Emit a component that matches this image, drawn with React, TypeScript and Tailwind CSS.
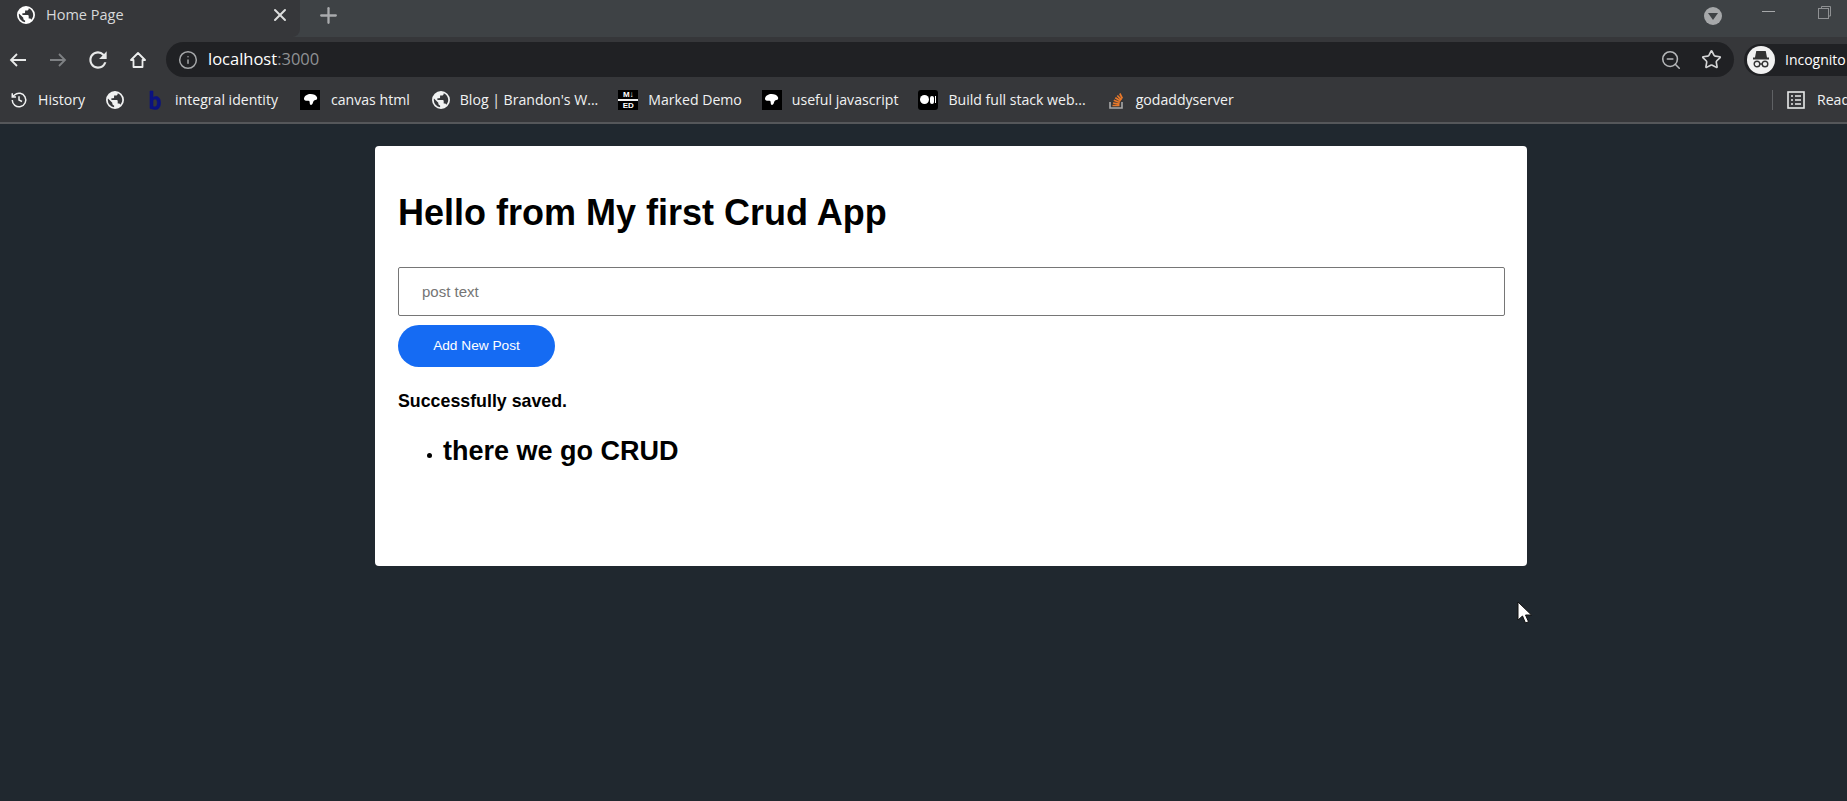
import { Info, Plus, Star, X, ZoomOut } from "lucide-react";

function Globe({ size = 18 }: { size?: number }) {
  return (
    <svg width={size} height={size} viewBox="2 2 20 20" fill="currentColor" className="shrink-0">
      <path d="M12 2a10 10 0 1 0 0 20 10 10 0 0 0 0-20zM4 12c0-.6.1-1.200.2-1.800L9 15v1c0 1.100.9 2 2 2v2a8 8 0 0 1-7-8zm13.900 5.400c-.3-.8-1-1.400-1.900-1.400h-1v-3c0-.6-.4-1-1-1H8v-2h2c.6 0 1-.4 1-1V7h2c1.100 0 2-.9 2-2v-.4a8 8 0 0 1 2.900 12.800z" />
    </svg>
  );
}

function Fav({ kind }: { kind: string }) {
  if (kind === "globe") return <Globe />;
  if (kind === "b") {
    return (
      <svg width="12" height="20" viewBox="0 0 12 20" className="shrink-0">
        <path d="M1 1h3v6.500C5 6.800 6 6.500 7 6.500c2.800 0 4.500 2.300 4.500 6.300 0 4-1.900 6.700-4.700 6.700-1.300 0-2.700-.4-5.800-1.100zM4 10.200v6.300c.7.300 1.300.4 2 .4 1.400 0 2.300-1.500 2.300-4.100 0-2.400-.8-3.700-2-3.700-.9 0-1.600.4-2.300 1.100z" fill="#0b1280" stroke="#0b1280" strokeWidth=".6" />
      </svg>
    );
  }
  if (kind === "blob") {
    return (
      <span className="flex h-5 w-5 shrink-0 items-center justify-center bg-black">
        <svg width="15" height="13" viewBox="0 0 15 13">
          <path d="M1 5.500C1.500 2.500 4.500 1 7.500 1c3 0 5.500 1 6.500 3.200.6 1.500-.2 2.600-1.600 2.900-1.200.3-2 .9-2.400 2.400-.4 1.800-1.600 2.800-2.600 2.300-.8-.4-.5-2-.9-3.300C6.100 7.300 4.500 8 3 7.800 1.800 7.600.8 6.700 1 5.500z" fill="#fff" />
        </svg>
      </span>
    );
  }
  if (kind === "marked") {
    return (
      <span className="flex h-5 w-5 shrink-0 flex-col bg-[#f0f0f0] text-center font-['Liberation_Sans',sans-serif] text-[8px] leading-[9px] font-bold text-white">
        <span className="h-[9px] bg-black">M↓</span>
        <span className="mt-[2px] h-[9px] bg-black">ED</span>
      </span>
    );
  }
  if (kind === "medium") {
    return (
      <span className="flex h-5 w-5 shrink-0 items-center justify-center gap-px rounded-[3px] bg-black">
        <span className="h-[9px] w-[9px] rounded-full bg-white" />
        <span className="h-2 w-1 rounded-full bg-white" />
        <span className="h-[7px] w-px bg-white" />
      </span>
    );
  }
  return (
    <svg width="20" height="20" viewBox="0 0 20 20" fill="none" className="shrink-0">
      <path d="M4 12v6h12v-6" stroke="#a8a8a8" strokeWidth="1.600" />
      <path d="M6.500 15.500h7M7 13l6.500 1.100M7.800 10.300l6 2.200M9.300 7.800l5.300 3.200M11.300 5.500l4.200 4.300M13.800 3.500l2.500 5" stroke="#e8782a" strokeWidth="1.700" />
    </svg>
  );
}

const bookmarks = [
  { kind: "b", label: "integral identity", gap: "gap-[14px] mr-[2px]" },
  { kind: "blob", label: "canvas html", gap: "gap-[11px] mr-[2px]" },
  { kind: "globe", label: "Blog | Brandon's W...", gap: "gap-[10px]" },
  { kind: "marked", label: "Marked Demo", gap: "gap-[10px]" },
  { kind: "blob", label: "useful javascript", gap: "gap-[10px]" },
  { kind: "medium", label: "Build full stack web...", gap: "gap-[10px]" },
  { kind: "stack", label: "godaddyserver", gap: "gap-[10px]" },
];

function BrowserChrome() {
  return (
    <header className="shrink-0 font-['Open_Sans','Liberation_Sans',sans-serif] text-white">
      <div className="flex h-[37px] items-center overflow-hidden bg-[#3e4245] pb-[6px]">
        <div className="-mb-[6px] flex h-[37px] w-[300px] shrink-0 items-center rounded-br-lg bg-[#36373a] pr-[10px] pb-[7px] pl-[17px]">
          <Globe />
          <span className="ml-[11px] text-[14.5px] text-[#d8d9da]">Home Page</span>
          <X size={20} strokeWidth={2.400} className="ml-auto text-[#dcdddd]" />
        </div>
        <Plus size={25} strokeWidth={2.200} className="ml-[16px] text-[#a9abad]" />
        <span className="ml-auto flex h-[18px] w-[18px] items-center justify-center rounded-full bg-[#a6a8aa]">
          <span className="mt-[2px] h-0 w-0 border-x-[5px] border-t-[7px] border-x-transparent border-t-[#3e4245]" />
        </span>
        <span className="mb-[8px] ml-[40px] h-px w-[13px] bg-[#a6a8aa]" />
        <svg width="13" height="13" viewBox="0 0 13 13" fill="none" stroke="#8f9193" className="mr-[16px] mb-[6px] ml-[43px]">
          <path d="M3.500 2.500V.5h9v9.500h-2" />
          <rect x=".5" y="2.500" width="10" height="10" />
        </svg>
      </div>
      <div className="flex h-[42px] items-center overflow-hidden bg-[#36373a] pt-[3px]">
        <svg width="17" height="14" viewBox="0 0 17 14" fill="none" stroke="#e8e9e9" strokeWidth="1.800" className="ml-[9px] shrink-0">
          <path d="M17 7H2M8 1 2 7l6 6" />
        </svg>
        <svg width="17" height="14" viewBox="0 0 17 14" fill="none" stroke="#7f8184" strokeWidth="1.800" className="ml-[24px] shrink-0">
          <path d="M0 7h15M9 1l6 6-6 6" />
        </svg>
        <svg width="26" height="26" viewBox="0 0 24 24" fill="#e8e9e9" className="ml-[18px] shrink-0">
          <path d="M17.650 6.350A7.958 7.958 0 0 0 12 4c-4.420 0-7.990 3.580-7.990 8s3.570 8 7.990 8c3.730 0 6.840-2.550 7.730-6h-2.080A5.990 5.990 0 0 1 12 18c-3.310 0-6-2.690-6-6s2.690-6 6-6c1.660 0 3.140.69 4.220 1.780L13 11h7V4l-2.350 2.350z" />
        </svg>
        <svg width="16" height="16" viewBox="0 0 16 16" fill="none" stroke="#eceded" strokeWidth="1.800" strokeLinejoin="round" className="ml-[19px] shrink-0">
          <path d="M1 8 8 1l7 7h-2.500v7h-9V8z" />
        </svg>
        <div className="ml-[20px] flex h-[35px] flex-1 items-center rounded-full bg-[#202124] pr-[12px] pl-[12px]">
          <Info size={20} strokeWidth={1.800} className="text-[#a5a7a9]" />
          <span className="ml-[10px] text-[16.500px]">
            localhost<span className="text-[#8f9194]">:3000</span>
          </span>
          <ZoomOut size={22} strokeWidth={1.700} className="ml-auto text-[#b5b7b9]" />
          <Star size={21} strokeWidth={1.900} className="ml-[19px] text-[#d5d6d7]" />
        </div>
        <div className="ml-[10px] flex h-[32px] w-[103px] shrink-0 items-center rounded-l-full bg-[#202124] pl-[3px]">
          <span className="flex h-7 w-7 shrink-0 items-center justify-center rounded-full bg-[#f1f1f1]">
            <svg width="20" height="17" viewBox="0 0 20 17" fill="none">
              <path d="M6 1h8l1 5H5zM2 7.500h16" stroke="#333" strokeWidth="1.800" fill="#333" />
              <circle cx="6" cy="13" r="2.800" stroke="#333" strokeWidth="1.400" />
              <circle cx="14" cy="13" r="2.800" stroke="#333" strokeWidth="1.400" />
              <path d="M9 13h2" stroke="#333" strokeWidth="1.400" />
            </svg>
          </span>
          <span className="ml-[10px] text-[14px] whitespace-nowrap">Incognito</span>
        </div>
      </div>
      <div className="flex h-[45px] items-center overflow-hidden border-b-2 border-[#55575a] bg-[#36373a] pb-px text-[14.100px] text-[#f1f2f2] whitespace-nowrap">
        <svg width="18" height="18" viewBox="0 0 24 24" fill="none" stroke="currentColor" strokeWidth="2" className="ml-[10px] shrink-0">
          <path d="M3 12a9 9 0 1 0 3-6.700L3 8M3 3v5h5M12 7v5l4 2" />
        </svg>
        <span className="ml-[10px]">History</span>
        <span className="mr-[25px] ml-[21px] flex">
          <Globe />
        </span>
        <div className="flex items-center gap-5">
          {bookmarks.map((b, i) => (
            <div key={i} className={`flex items-center ${b.gap}`}>
              <Fav kind={b.kind} />
              <span>{b.label}</span>
            </div>
          ))}
        </div>
        <span className="ml-auto h-5 w-px bg-[#5f6164]" />
        <svg width="18" height="18" viewBox="0 0 18 18" fill="none" stroke="#e8e9e9" strokeWidth="1.600" className="ml-[14px] shrink-0">
          <rect x="1" y="1" width="16" height="16" />
          <path d="M4 5h2M4 9h2M4 13h2M8 5h6M8 9h6M8 13h6" />
        </svg>
        <span className="ml-[12px] w-[30px] overflow-hidden">Reading list</span>
      </div>
    </header>
  );
}

export default function App() {
  return (
    <div className="relative flex h-[801px] flex-col overflow-hidden bg-[#20282f] font-['Liberation_Sans',sans-serif]">
      <BrowserChrome />
      <main className="mt-[22px] ml-[375px] h-[420px] w-[1152px] overflow-hidden rounded-[4px] bg-white pr-[22px] pl-[23px] text-black">
        <h1 className="mt-[46px] text-[36px] leading-[41px] font-bold">Hello from My first Crud App</h1>
        <input
          placeholder="post text"
          className="mt-[34px] block h-[49px] w-full rounded-[2px] border border-[#767676] px-[23px] text-[15px] placeholder:text-[#757575]"
        />
        <button className="mt-[9px] block h-[42px] w-[157px] rounded-full bg-[#156bf3] text-[13.700px] text-white">Add New Post</button>
        <p className="mt-6 text-[17.800px] leading-[21px] font-bold">Successfully saved.</p>
        <ul className="mt-6 list-disc pl-[45px] marker:text-[16px]">
          <li className="text-[27px] leading-[30px] font-bold">there we go CRUD</li>
        </ul>
      </main>
      <svg width="16" height="24" viewBox="0 0 16 24" className="absolute top-[601px] left-[1517px]">
        <path d="M1 1v18l4.500-4 3 7 3-1.300-3-6.700h6z" fill="#fff" stroke="#111" strokeWidth="1" />
      </svg>
    </div>
  );
}
